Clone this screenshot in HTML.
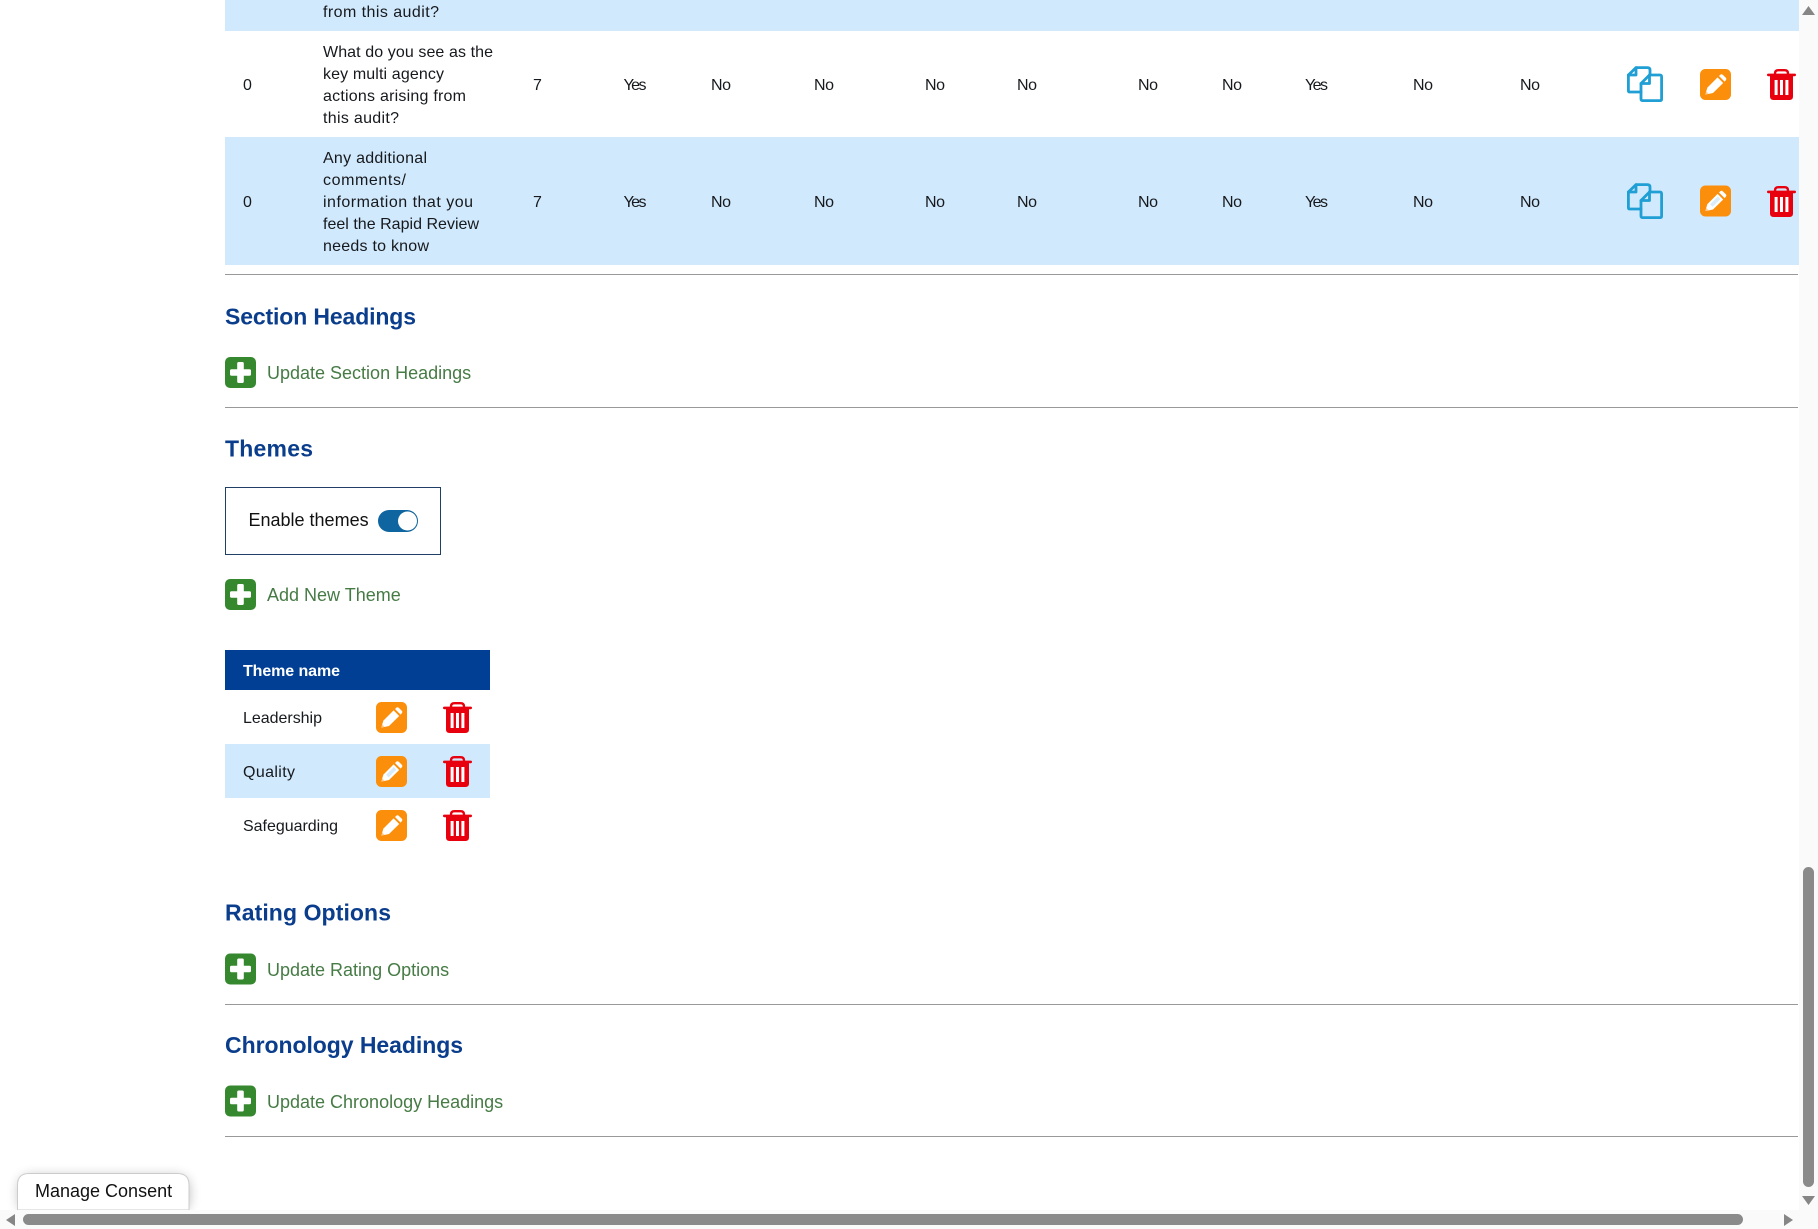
<!DOCTYPE html>
<html lang="en">
<head>
<meta charset="utf-8">
<title>Template configuration</title>
<style>
html,body{margin:0;padding:0;background:#fff;width:1818px;height:1229px;overflow:hidden}
svg{display:block}
text{font-family:"Liberation Sans",Arial,sans-serif}
.c{font-size:16px;fill:#16191d}
.h{font-size:23px;font-weight:700;fill:#0a3d8c}
.g{font-size:18px;fill:#467b45}
.k{font-size:18px;fill:#111}
</style>
</head>
<body>
<svg xmlns="http://www.w3.org/2000/svg" width="1818" height="1229" viewBox="0 0 1818 1229">
<defs>
<symbol id="copy" viewBox="0 0 36 36" width="36" height="36">
<g fill="none" stroke="#1f9fd4" stroke-width="2.8" stroke-linejoin="round" stroke-linecap="round">
<path d="M14 26H2.5Q1.4 26 1.4 24.5V9L9 1.6H20.5Q23 1.6 23 4V9"/>
<path d="M9 1.6V9H1.4"/>
<path d="M14 17.5L22.5 9H33Q34.6 9 34.6 11V33Q34.6 34.6 33 34.6H16Q14 34.6 14 33Z"/>
<path d="M22.5 9V17.5H14"/>
</g>
</symbol>
<symbol id="edit" viewBox="0 0 31 31" width="31" height="31">
<rect width="31" height="31" rx="5.5" fill="#fb8f0b"/>
<path d="M5.2 25.6L7.4 18.6L17.6 8.4L23.2 14L13 24Z" fill="#fff"/>
<path d="M19 7L20.3 5.7Q21.5 4.7 22.7 5.7L25.8 8.8Q26.9 10 25.8 11.2L24.6 12.6Z" fill="#fff"/>
<path d="M10 18.8L17.8 11L20.4 13.6L12.6 21.4Z" fill="currentColor" opacity=".85"/>
<path d="M5.2 25.6L6.2 22.4L8.4 24.6Z" fill="#fb8f0b" opacity=".45"/>
</symbol>
<symbol id="trash" viewBox="0 0 29 31" width="29" height="31">
<path d="M8 6V4.5Q8 1.2 11.5 1.2H17.5Q21 1.2 21 4.5V6" fill="none" stroke="#e8000e" stroke-width="2.4"/>
<rect x="0" y="4.6" width="29" height="2.6" rx="1.2" fill="#e8000e"/>
<path d="M3 7H26V27.5Q26 31 22.5 31H6.5Q3 31 3 27.5Z" fill="#e8000e"/>
<rect x="7.6" y="11" width="3" height="15" fill="#fff"/>
<rect x="13" y="11" width="3" height="15" fill="#fff"/>
<rect x="18.4" y="11" width="3" height="15" fill="#fff"/>
</symbol>
<symbol id="plus" viewBox="0 0 31 31" width="31" height="31">
<rect width="31" height="31" rx="5" fill="#36882f"/>
<path d="M12.2 6.5Q12.2 5 13.7 5H17.3Q18.8 5 18.8 6.5V12.2H24.5Q26 12.2 26 13.7V17.3Q26 18.8 24.5 18.8H18.8V24.5Q18.8 26 17.3 26H13.7Q12.2 26 12.2 24.5V18.8H6.5Q5 18.8 5 17.3V13.7Q5 12.2 6.5 12.2H12.2Z" fill="#fff"/>
</symbol>
<filter id="sh" x="-20%" y="-40%" width="140%" height="180%"><feGaussianBlur stdDeviation="6"/></filter>
</defs>

<!-- main table rows -->
<rect x="225" y="0" width="1574" height="31" fill="#d1e9fc"/>
<rect x="225" y="137" width="1574" height="128" fill="#d1e9fc"/>
<text class="c" x="323" y="17" textLength="116">from this audit?</text>

<text class="c" x="243" y="90">0</text>
<text class="c" x="323" y="57" textLength="170">What do you see as the</text>
<text class="c" x="323" y="79" textLength="121">key multi agency</text>
<text class="c" x="323" y="101" textLength="143">actions arising from</text>
<text class="c" x="323" y="123" textLength="76">this audit?</text>
<text class="c" x="533" y="90">7</text>
<text class="c" x="623.5" y="90" textLength="23">Yes</text>
<text class="c" x="711" y="90" textLength="20">No</text>
<text class="c" x="814" y="90" textLength="20">No</text>
<text class="c" x="925" y="90" textLength="20">No</text>
<text class="c" x="1017" y="90" textLength="20">No</text>
<text class="c" x="1138" y="90" textLength="20">No</text>
<text class="c" x="1222" y="90" textLength="20">No</text>
<text class="c" x="1305" y="90" textLength="23">Yes</text>
<text class="c" x="1413" y="90" textLength="20">No</text>
<text class="c" x="1520" y="90" textLength="20">No</text>
<use href="#copy" x="1627" y="66"/>
<use href="#edit" x="1700" y="69" color="#fff"/>
<use href="#trash" x="1767" y="69"/>

<text class="c" x="243" y="207">0</text>
<text class="c" x="323" y="163" textLength="104">Any additional</text>
<text class="c" x="323" y="185" textLength="83">comments/</text>
<text class="c" x="323" y="207" textLength="150">information that you</text>
<text class="c" x="323" y="229" textLength="156">feel the Rapid Review</text>
<text class="c" x="323" y="251" textLength="106">needs to know</text>
<text class="c" x="533" y="207">7</text>
<text class="c" x="623.5" y="207" textLength="23">Yes</text>
<text class="c" x="711" y="207" textLength="20">No</text>
<text class="c" x="814" y="207" textLength="20">No</text>
<text class="c" x="925" y="207" textLength="20">No</text>
<text class="c" x="1017" y="207" textLength="20">No</text>
<text class="c" x="1138" y="207" textLength="20">No</text>
<text class="c" x="1222" y="207" textLength="20">No</text>
<text class="c" x="1305" y="207" textLength="23">Yes</text>
<text class="c" x="1413" y="207" textLength="20">No</text>
<text class="c" x="1520" y="207" textLength="20">No</text>
<use href="#copy" x="1627" y="183"/>
<use href="#edit" x="1700" y="185.5" color="#d1e9fc"/>
<use href="#trash" x="1767" y="186"/>

<rect x="225" y="274" width="1573" height="1" fill="#999"/>

<!-- Section Headings -->
<text class="h" x="225" y="324.5" textLength="191">Section Headings</text>
<use href="#plus" x="225" y="357"/>
<text class="g" x="267" y="379">Update Section Headings</text>
<rect x="225" y="407" width="1573" height="1" fill="#999"/>

<!-- Themes -->
<text class="h" x="225" y="456.5" textLength="88">Themes</text>
<rect x="225.5" y="487.5" width="215" height="67" fill="#fff" stroke="#1f3f66"/>
<text class="k" x="248.5" y="526">Enable themes</text>
<rect x="378" y="510" width="40" height="22" rx="11" fill="#0f659f"/>
<circle cx="407.5" cy="521" r="9.5" fill="#fff"/>
<use href="#plus" x="225" y="579"/>
<text class="g" x="267" y="601">Add New Theme</text>

<!-- Theme table -->
<rect x="225" y="650" width="265" height="40" fill="#003f94"/>
<text x="243" y="676" style="font-size:16px;font-weight:700;fill:#fff" textLength="97">Theme name</text>
<rect x="225" y="744" width="265" height="54" fill="#d1e9fc"/>
<text class="c" x="243" y="723" textLength="79">Leadership</text>
<use href="#edit" x="376" y="702" color="#fff"/>
<use href="#trash" x="443" y="702"/>
<text class="c" x="243" y="777" textLength="52">Quality</text>
<use href="#edit" x="376" y="756" color="#d1e9fc"/>
<use href="#trash" x="443" y="756"/>
<text class="c" x="243" y="831" textLength="95">Safeguarding</text>
<use href="#edit" x="376" y="810" color="#fff"/>
<use href="#trash" x="443" y="810"/>

<!-- Rating Options -->
<text class="h" x="225" y="920.5" textLength="166">Rating Options</text>
<use href="#plus" x="225" y="953.5"/>
<text class="g" x="267" y="976">Update Rating Options</text>
<rect x="225" y="1004" width="1573" height="1" fill="#999"/>

<!-- Chronology Headings -->
<text class="h" x="225" y="1052.8" textLength="238">Chronology Headings</text>
<use href="#plus" x="225" y="1085.5"/>
<text class="g" x="267" y="1108">Update Chronology Headings</text>
<rect x="225" y="1136" width="1573" height="1" fill="#999"/>

<!-- Consent tab -->
<rect x="19" y="1176" width="170" height="36" rx="12" fill="#000" opacity=".28" filter="url(#sh)"/>
<path d="M17.5 1210V1185Q17.5 1173.5 29 1173.5H177.5Q189 1173.5 189 1185V1210Z" fill="#fff" stroke="#ccc"/>
<text x="35" y="1197" style="font-size:18px;fill:#111">Manage Consent</text>

<!-- Scrollbars -->
<rect x="1799" y="0" width="19" height="1229" fill="#fafafa"/>
<rect x="0" y="1210" width="1818" height="19" fill="#fafafa"/>
<path d="M1808.5 6L1815 15H1802Z" fill="#868686"/>
<rect x="1803" y="867" width="11" height="320" rx="5.5" fill="#8a8a8a"/>
<path d="M1802 1196H1815L1808.5 1205Z" fill="#868686"/>
<path d="M6 1220L15 1214V1226Z" fill="#868686"/>
<rect x="23" y="1214" width="1720" height="11" rx="5.5" fill="#8a8a8a"/>
<path d="M1784 1214L1793 1220L1784 1226Z" fill="#868686"/>
</svg>
</body>
</html>
